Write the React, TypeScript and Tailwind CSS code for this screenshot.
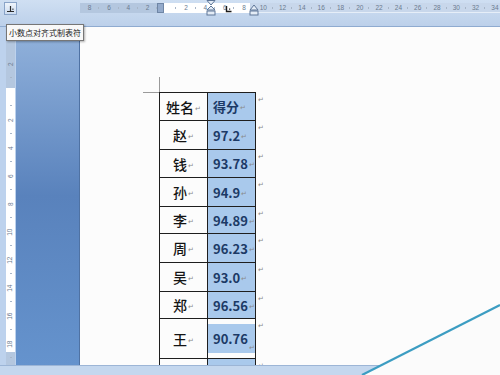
import React from "react";

type Row = {
  name: string;
  score: string;
  h: string;
  tall?: boolean;
  empty?: boolean;
};

const rows: Row[] = [
  { name: "姓名", score: "得分", h: "h-[28px]" },
  { name: "赵", score: "97.2", h: "h-[29px]" },
  { name: "钱", score: "93.78", h: "h-[28px]" },
  { name: "孙", score: "94.9", h: "h-[29px]" },
  { name: "李", score: "94.89", h: "h-[27px]" },
  { name: "周", score: "96.23", h: "h-[29px]" },
  { name: "吴", score: "93.0", h: "h-[29px]" },
  { name: "郑", score: "96.56", h: "h-[27px]" },
  { name: "王", score: "90.76", h: "h-[40px]", tall: true },
  { name: "", score: "", h: "h-[24px]", empty: true },
];

const hLabels = ["8", "6", "4", "2", "", "2", "4", "6", "8", "10", "12", "14", "16", "18", "20", "22", "24", "26", "28", "30", "32", "34"];
const vLabels = ["2", "", "2", "4", "6", "8", "10", "12", "14", "16", "18"];

const Mark = () => (
  <span className="ml-[1px] text-[7px] leading-none text-[#8a8a8a] self-end mb-[2px]">↵</span>
);

const TabIcon = () => (
  <div className="ml-[4px] mt-[2px] w-[13px] h-[13px] border border-[#8aa4c8] bg-gradient-to-b from-[#eef4fb] to-[#cddcf0]">
    <svg width="11" height="11" viewBox="0 0 11 11">
      <path d="M2 8.5 H9 M5.5 3 V8.5" stroke="#2a2a2a" strokeWidth="1.2" fill="none" />
      <rect x="7.3" y="5.6" width="1.2" height="1.2" fill="#2a2a2a" />
    </svg>
  </div>
);

const HRuler = () => (
  <div className="relative ml-[63px] mt-[3px] h-[10px] flex-1">
    <div className="flex h-full">
      <div className="w-[80px] bg-[#b4c7df]" />
      <div className="w-[90px] bg-white" />
      <div className="flex-1 bg-[#c8d7eb] border-b border-[#e6eef8]" />
    </div>
    <div className="absolute inset-0 flex">
      {hLabels.map((l, i) => (
        <div key={i} className="w-[19.3px] shrink-0 flex items-center justify-center text-[6.5px] leading-none text-[#6b7b90] font-['Liberation_Sans',sans-serif] relative">
          {l}
          <span className="absolute right-0 top-[4px] w-px h-[2px] bg-[#a8b6c8]" />
        </div>
      ))}
    </div>
    {/* indent markers */}
    <svg className="absolute left-[77px] top-0" width="8" height="10" viewBox="0 0 8 10">
      <rect x="0.5" y="0.5" width="6" height="9" fill="#93aacb" stroke="#6f86a6" strokeWidth="1" />
    </svg>
    <svg className="absolute left-[126px] top-[-3px]" width="10" height="16" viewBox="0 0 10 16">
      <path d="M1 0.5 H9 L5 5 Z" fill="#e4ecf6" stroke="#5e7698" strokeWidth="1" />
      <path d="M5 6 L9 10 H1 Z" fill="#e4ecf6" stroke="#5e7698" strokeWidth="1" />
      <rect x="1" y="11" width="8" height="4" fill="#e4ecf6" stroke="#5e7698" strokeWidth="1" />
    </svg>
    <svg className="absolute left-[145px] top-[3px]" width="7" height="7" viewBox="0 0 7 7">
      <path d="M1.5 0 V5.5 H6.5" stroke="#1a1a1a" strokeWidth="1.4" fill="none" />
      <rect x="4" y="2.5" width="1.2" height="1.2" fill="#1a1a1a" />
    </svg>
    <svg className="absolute left-[169px] top-[1px]" width="10" height="12" viewBox="0 0 10 12">
      <path d="M5 1 L9 6 H1 Z" fill="#e4ecf6" stroke="#5e7698" strokeWidth="1" />
      <rect x="1" y="7" width="8" height="4" fill="#e4ecf6" stroke="#5e7698" strokeWidth="1" />
    </svg>
  </div>
);

const VRuler = () => (
  <div className="relative w-[9px] h-full">
    <div className="flex flex-col h-full">
      <div className="h-[61px] bg-[#b4c7df]" />
      <div className="flex-1 bg-white" />
      <div className="h-[13px] bg-[#b4c7df]" />
    </div>
    <div className="absolute inset-0 flex flex-col pt-[23px]">
      {vLabels.map((l, i) => (
        <div key={i} className="h-[28px] shrink-0 flex items-center justify-center relative">
          <span className="-rotate-90 text-[6.5px] leading-none text-[#6b7b90] font-['Liberation_Sans',sans-serif]">{l}</span>
          <span className="absolute bottom-0 left-[4px] w-[2px] h-px bg-[#a8b6c8]" />
        </div>
      ))}
    </div>
  </div>
);

const ScoreTable = () => (
  <table className="border-collapse ml-[79px] -mt-px">
    <tbody>
      {rows.map((r, i) => (
        <tr key={i}>
          <td className={`border border-[#1e1e1e] w-[48px] p-0 ${r.h}`}>
            {!r.empty && (
              <div className="flex justify-center items-center">
                <span className="text-[14px] leading-none font-medium text-[#141414]">{r.name}</span>
                <Mark />
              </div>
            )}
          </td>
          <td
            className={`border border-[#1e1e1e] w-[48px] p-0 ${r.h} ${r.tall ? "bg-[#fcfcfc]" : "bg-[#a9c9ec]"}`}
          >
            {!r.empty && (
              <div
                className={`flex items-center pl-[5px] ${r.tall ? "h-[29px] bg-[#a9c9ec]" : ""}`}
              >
                <span className="text-[13px] leading-none font-semibold text-[#1c3a66]">{r.score}</span>
                <Mark />
              </div>
            )}
          </td>
          <td className="p-0 pl-[2px] align-top">
            <span className="block text-[7px] leading-none text-[#8a8a8a] mt-[3px]">↵</span>
          </td>
        </tr>
      ))}
    </tbody>
  </table>
);

export default function App() {
  return (
    <div className="relative w-[500px] h-[375px] overflow-hidden flex flex-col font-['Noto_Sans_CJK_SC',sans-serif] bg-[#c5d7ee]">
      {/* top ruler bar */}
      <div className="h-[27px] flex items-start bg-gradient-to-b from-[#cfdff2] to-[#bcd0ea] border-b border-[#8fabd0]">
        <TabIcon />
        <HRuler />
      </div>

      {/* middle */}
      <div className="flex flex-1 min-h-0">
        <div className="w-[16px] bg-[#bdd2ed] pl-[6px]">
          <VRuler />
        </div>
        <div className="w-[64px] bg-gradient-to-b from-[#93b3dc] via-[#5982bc] to-[#6593cd] border-r border-[#4f72a3]" />
        <div className="flex-1 bg-[#fcfcfc] overflow-hidden pt-[50px]">
          <div className="ml-[63px] w-[17px] h-[16px] border-r border-b border-[#9a9a9a]" />
          <ScoreTable />
        </div>
      </div>

      {/* bottom bar */}
      <div className="h-[10px] bg-[#c4d7ee] border-t border-[#9cb5d6]" />

      {/* tooltip */}
      <div className="absolute left-[6px] top-[24px] h-[17px] px-[2px] flex items-center bg-[#f8f8f8] border border-[#767676] shadow-[1px_1px_2px_rgba(0,0,0,0.3)] text-[8px] leading-none text-[#222]">
        小数点对齐式制表符
      </div>

      {/* page curl line */}
      <svg className="absolute left-[340px] top-[295px]" width="160" height="80" viewBox="0 0 160 80">
        <polygon points="22,80 160,10 160,80" fill="#fbfbfb" />
        <line x1="22" y1="80" x2="160" y2="10" stroke="#3c9dc2" strokeWidth="2.2" />
      </svg>
    </div>
  );
}
